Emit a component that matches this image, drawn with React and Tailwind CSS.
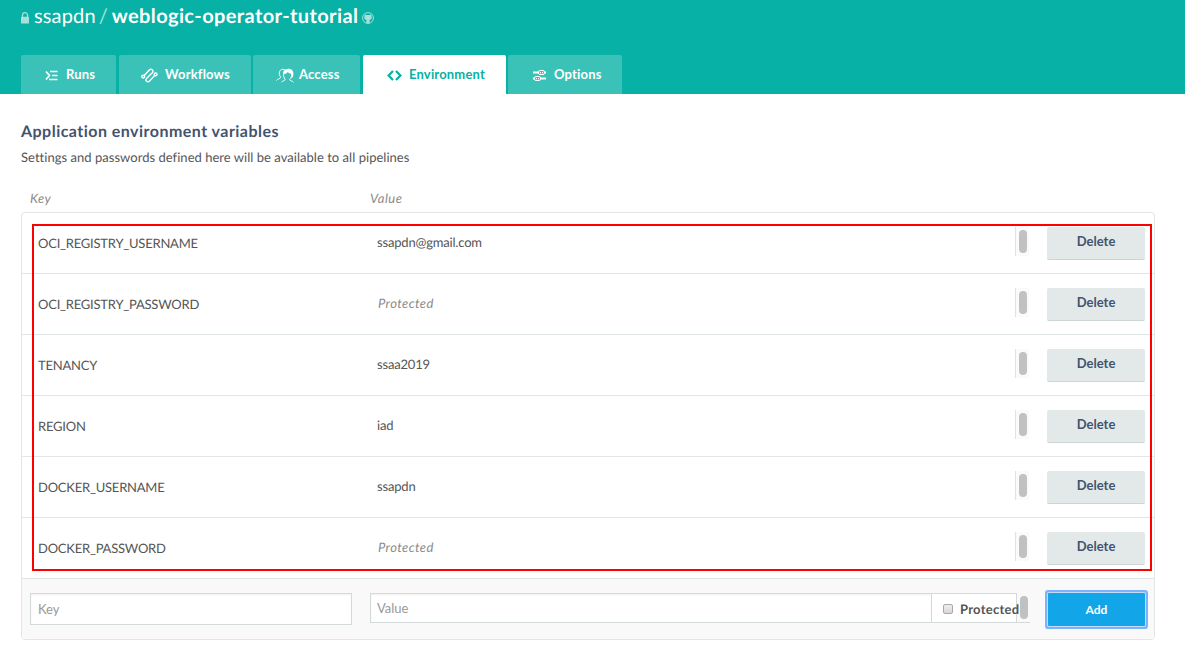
import React from "react";

const variables = [
  { key: "OCI_REGISTRY_USERNAME", value: "ssapdn@gmail.com" },
  { key: "OCI_REGISTRY_PASSWORD" },
  { key: "TENANCY", value: "ssaa2019" },
  { key: "REGION", value: "iad" },
  { key: "DOCKER_USERNAME", value: "ssapdn" },
  { key: "DOCKER_PASSWORD" },
];

function LockIcon() {
  return (
    <svg className="h-3 w-2 shrink-0" viewBox="0 0 8 12">
      <path d="M1.5 5V3a2.5 2.3 0 0 1 5 0V5" fill="none" stroke="#a6e1dc" strokeWidth="1.3" />
      <rect y="4.8" width="8" height="6.7" rx="0.6" fill="#a6e1dc" />
    </svg>
  );
}

function GithubIcon() {
  return (
    <svg className="h-3 w-3 shrink-0" viewBox="0 0 12 12">
      <circle cx="6" cy="6" r="5.4" fill="none" stroke="#a6e1dc" strokeWidth="1" />
      <path
        d="M2.8 2.4L4.4 3.1H7.6L9.2 2.4L9.5 4.3C10.2 6.3 9.3 7.7 7.6 8V11.2H4.4V8C2.7 7.7 1.8 6.3 2.5 4.3Z"
        fill="#a6e1dc"
      />
    </svg>
  );
}

function RunsIcon() {
  return (
    <svg className="mt-[2px] h-[11px] w-[13px]" viewBox="0 0 13 11" fill="none" stroke="currentColor" strokeWidth="1.7">
      <path d="M1 1.5L4.5 5.5L1 9.5M5 1.5H12.5M7 5.5H12.5M4 9.5H12.5" />
    </svg>
  );
}

function WorkflowsIcon() {
  return (
    <svg className="mt-[2px] h-[15px] w-[17px]" viewBox="0 0 17 15" fill="none" stroke="currentColor" strokeWidth="1.4">
      <circle cx="2.2" cy="8.6" r="1.4" />
      <circle cx="14.6" cy="6.4" r="1.4" />
      <path d="M3.2 7.5L8.3 2C10.2 0 13.2 2.5 11.3 4.700L5.700 10.300C3.800 12.500 6.500 15.200 8.600 13L13.600 7.500" />
    </svg>
  );
}

function AccessIcon() {
  return (
    <svg className="mt-[2px] h-[15px] w-[19px]" viewBox="0 0 19 15" fill="none" stroke="currentColor" strokeWidth="1">
      <path d="M.5 12.5C1.3 10.8 4.2 10.9 4.5 9.400C4.700 8.400 3 7.400 3.300 5.100C3.400 2.600 4.800 1.300 7 1.300C8 1.300 8.600 1.600 9 2.100M5.500 14.300C6.300 12.800 9 12.800 9.200 11.500C7.500 9.800 7.500 7.500 7.700 5.900M15.500 6C15.800 8.400 15.200 10.200 13.600 11.400C13.900 12.900 16.600 12.900 17.500 14.300" />
      <path
        d="M7.100 6C6.800 2.800 9 .8 11.200 1.200C12 .5 15.200 .8 16.600 2.700C18.100 5.100 17.500 8.200 15.800 10.800L15.300 5.800C13.800 5.800 12.600 5 11.800 4.100C10.700 5.600 9.500 6.200 7.100 6Z"
        fill="currentColor"
        stroke="none"
      />
    </svg>
  );
}

function CodeIcon() {
  return (
    <svg className="mt-[2px] h-[11px] w-[15px]" viewBox="0 0 15 11" fill="none" stroke="currentColor" strokeWidth="2.2">
      <path d="M6 1L1.600 5.500L6 10M9 1L13.400 5.500L9 10" />
    </svg>
  );
}

function OptionsIcon() {
  return (
    <svg className="mt-[2px] h-[13px] w-[13px]" viewBox="0 0 13 13" fill="none" stroke="currentColor" strokeWidth="1">
      <path d="M0 3.500H5M11 3.500H13M0 9.500H2M8 9.500H13" strokeWidth="2" />
      <rect x="5.500" y="1.500" width="6" height="4" rx="1.500" />
      <rect x="1.500" y="7.500" width="6" height="4" rx="1.500" />
      <path d="M7.500 3V4.300M9.500 3V4.300M3.500 9V10.300M5.500 9V10.300" />
    </svg>
  );
}

function Tab({ icon, label, className, active }) {
  return (
    <button
      className={
        "flex h-[39px] shrink-0 items-center rounded-t-[2px] text-[13px] font-bold tracking-[0.17px] " +
        (active ? "bg-white text-[#07b1a5] " : "bg-[#3bc2b8] text-white ") +
        className
      }
    >
      {icon}
      <span className="whitespace-nowrap">{label}</span>
    </button>
  );
}

function VariableRow({ name, value }) {
  return (
    <div className="flex h-[61px] items-start border-b border-[#e1e7e7] pt-[14px] pl-4 text-[13px]">
      <div className="w-[339px] pt-[6px] leading-5 tracking-[-0.22px] text-[#555]">{name}</div>
      {value ? (
        <div className="w-[638px] pt-[5px] leading-5 tracking-[-0.18px] text-[#555]">{value}</div>
      ) : (
        <div className="w-[638px] pt-[5px] pl-px leading-5 tracking-[0.4px] text-[#8b8b8b] italic">Protected</div>
      )}
      <div className="flex h-[29px] w-[14px] border-l border-[#dfe3e3] bg-[#fafafa] pt-[3px] pl-[3px]">
        <div className="h-[23px] w-2 rounded-full bg-[#c1c1c1]" />
      </div>
      <button className="ml-[18px] h-[33px] w-[98px] rounded-[2px] border-b border-[#cdd4d4] bg-[#e2e9e8] pb-[3px] text-[13px] font-bold tracking-[0.02px] text-[#43536f]">
        Delete
      </button>
    </div>
  );
}

export default function App() {
  return (
    <div className="relative h-[645px] w-[1185px] overflow-hidden bg-white font-['Lato',sans-serif] text-[#555] antialiased [text-rendering:geometricPrecision]">
      <header className="flex h-[94px] flex-col justify-between bg-[#07b1a5]">
        <h1 className="flex h-8 items-center pl-[21px] text-[20px] leading-8 text-white">
          <span className="pt-1"><LockIcon /></span>
          <span className="ml-[5px] tracking-[0.15px] whitespace-pre">ssapdn</span>
          <span className="ml-[3px] text-[#a6e1dc]">/</span>
          <span className="ml-[4px] font-bold tracking-[0.38px] whitespace-nowrap">weblogic-operator-tutorial</span>
          <span className="ml-[4px] pt-1"><GithubIcon /></span>
        </h1>
        <nav className="flex pl-[21px]">
          <Tab className="w-[95px] gap-[8px] pl-6" icon={<RunsIcon />} label="Runs" />
          <Tab className="ml-[3px] w-[132px] gap-[7px] pl-[22px]" icon={<WorkflowsIcon />} label="Workflows" />
          <Tab className="ml-[2px] w-[107px] gap-[4px] pl-[23px]" icon={<AccessIcon />} label="Access" />
          <Tab className="ml-[3px] w-[143px] gap-[7px] pl-6" icon={<CodeIcon />} label="Environment" active />
          <Tab className="ml-[2px] w-[114px] gap-[8px] pl-[25px]" icon={<OptionsIcon />} label="Options" />
        </nav>
      </header>

      <main className="pr-[30px] pl-[21px]">
        <h2 className="pt-[28px] text-[16px] leading-5 font-bold tracking-[0.47px] text-[#43536f]">
          Application environment variables
        </h2>
        <p className="pt-[5px] text-[13px] leading-5 tracking-[0.03px]">
          Settings and passwords defined here will be available to all pipelines
        </p>
        <div className="flex h-[45px] pt-[21px] pl-[9px] text-[13px] leading-5 tracking-[0.5px] text-[#8b8b8b] italic">
          <div className="w-[340px]">Key</div>
          <div>Value</div>
        </div>

        <section className="h-[428px] w-[1134px] overflow-hidden rounded-[4px] border border-[#e1e7e7]">
          {variables.map((v) => (
            <VariableRow key={v.key} name={v.key} value={v.value} />
          ))}
          <div className="flex h-[60px] items-start bg-[#f9f9f9] pt-[14px] pl-2 text-[13px]">
            <input
              className="h-8 w-[322px] border border-[#d3dad9] bg-white px-[7px] shadow-[inset_0_1px_2px_rgba(0,0,0,0.06)] placeholder:text-[#999]"
              placeholder="Key"
            />
            <div className="ml-[18px] flex h-[30px] w-[660px]">
              <input
                className="h-[30px] w-[561px] border border-r-0 border-[#d3dad9] bg-white px-[6px] shadow-[inset_0_1px_2px_rgba(0,0,0,0.06)] placeholder:text-[#999]"
                placeholder="Value"
              />
              <label className="flex h-[30px] w-[86px] items-center border border-[#d3dad9] bg-white pt-[2px] pl-[11px] font-bold whitespace-nowrap">
                <span className="mr-[7px] h-[10px] w-[10px] shrink-0 rounded-[2px] border border-[#a9a9a9] bg-linear-to-b from-[#eee] to-[#d8d8d8]" />
                <span className="pt-px tracking-[0.25px]">Protected</span>
              </label>
              <div className="flex h-[30px] w-[13px] border-b border-[#d3dad9] pt-[3px] pl-[3px]">
                <div className="h-[23px] w-2 rounded-full bg-[#c1c1c1]" />
              </div>
            </div>
            <button className="ml-[18px] h-[33px] w-[97px] rounded-[1px] bg-[#12a5e8] text-[12px] font-bold text-white shadow-[0_0_0_1px_#c5dcf8,0_0_0_3px_#7cb2fd]">
              Add
            </button>
          </div>
        </section>
      </main>

      <div className="pointer-events-none absolute top-[224px] left-[32px] h-[347px] w-[1120px] border-2 border-[#ff0000]" />
    </div>
  );
}
